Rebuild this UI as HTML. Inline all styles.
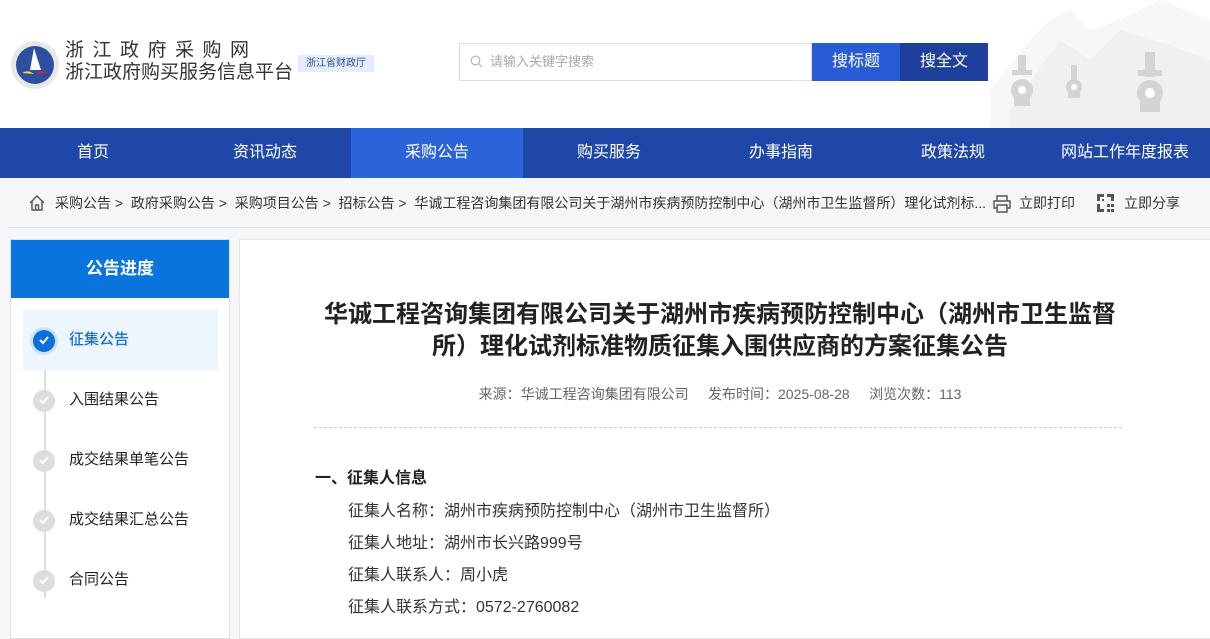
<!DOCTYPE html>
<html><head><meta charset="utf-8"><style>
*{margin:0;padding:0;box-sizing:border-box}
body{width:1210px;height:625px;overflow:hidden;background:#f5f6f7;font-family:"Liberation Sans","Noto Sans CJK SC",sans-serif;color:#333;position:relative}
.hdr{position:absolute;left:0;top:0;width:1210px;height:128px;background:#fff}
.nav{position:absolute;left:0;top:128px;width:1210px;height:50px;background:#1f47a7;display:flex;padding-left:7px}
.nav div{width:172px;text-align:center;color:#fff;font-size:16px;line-height:50px;flex:none}
.nav .on{background:#2b63d9}
.bc{position:absolute;top:178px;left:0;width:1210px;height:50px;font-size:14px;color:#333;line-height:50px}
.abs{position:absolute}
.side{position:absolute;left:10px;top:239px;width:220px;height:400px;background:#fff;border:1px solid #e0e0e0}
.side .h{height:58px;background:#0a74de;color:#fff;font-size:17px;font-weight:bold;text-align:center;line-height:58px}
.step{position:absolute;left:12px;width:195px;height:60px;font-size:15px;line-height:60px;padding-left:46px;color:#222}
.dot{position:absolute;left:22px;top:20px;width:22px;height:22px;border-radius:50%;background:#ddd}
.main{position:absolute;left:239px;top:239px;width:975px;height:400px;background:#fff;border:1px solid #e6e6e6}
p.l{position:absolute;left:348px;font-size:16px;color:#333}
</style></head><body>
<div class="hdr">
 <svg class="abs" style="left:10px;top:40px" width="50" height="50" viewBox="0 0 50 50"><circle cx="25" cy="25" r="24" fill="#e8e8e8"/><circle cx="25" cy="25" r="19" fill="#2d4fa0"/><path d="M24 8 L31 30 L20 30 Z" fill="#fff"/><path d="M12 33 Q18 29 24 34 Z" fill="#f2d630"/><path d="M26 34 Q32 29 38 33 Z" fill="#d8262c"/></svg>
 <div class="abs" style="left:65px;top:40px;font-size:19px;letter-spacing:8.5px;color:#333;line-height:22px">浙江政府采购网</div>
 <div class="abs" style="left:65px;top:62px;font-size:19px;color:#333;line-height:22px">浙江政府购买服务信息平台</div>
 <div class="abs" style="left:298px;top:55px;width:76px;height:17px;background:#e4edfb;color:#2d4fa0;font-size:10px;text-align:center;line-height:17px">浙江省财政厅</div>
 <div class="abs" style="left:459px;top:43px;width:353px;height:38px;border:1px solid #ddd;font-size:13px;color:#aaa;line-height:36px;padding-left:30px">请输入关键字搜索</div>
 <svg class="abs" style="left:470px;top:55px" width="13" height="13" viewBox="0 0 13 13"><circle cx="5.5" cy="5.5" r="4.3" fill="none" stroke="#bbb" stroke-width="1.3"/><path d="M8.7 8.7L12 12" stroke="#bbb" stroke-width="1.3"/></svg>
 <div class="abs" style="left:812px;top:43px;width:88px;height:38px;background:#2a5bd7;color:#fff;font-size:16px;text-align:center;line-height:38px">搜标题</div>
 <div class="abs" style="left:900px;top:43px;width:88px;height:38px;background:#1e3f9c;color:#fff;font-size:16px;text-align:center;line-height:38px">搜全文</div>
 <svg class="abs" style="left:990px;top:0" width="220" height="128" viewBox="0 0 220 128"><path d="M0 90 L40 40 L60 20 L80 10 L100 30 L130 20 L170 0 L220 20 L220 128 L0 128Z" fill="#f7f7f7"/><path d="M20 110 L70 40 L100 60 L130 30 L180 45 L220 60 L220 128 L20 128Z" fill="#f0f0f0"/><g fill="#d4d4d4"><rect x="28" y="55" width="8" height="20"/><rect x="22" y="70" width="20" height="5"/><circle cx="32" cy="90" r="11"/><rect x="24" y="98" width="16" height="8"/><rect x="81" y="65" width="6" height="15"/><circle cx="84" cy="87" r="8"/><rect x="78" y="92" width="12" height="6"/><rect x="155" y="52" width="10" height="25"/><rect x="148" y="70" width="24" height="6"/><circle cx="160" cy="93" r="13"/><rect x="150" y="102" width="20" height="10"/></g><circle cx="32" cy="90" r="4" fill="#fff"/><circle cx="84" cy="87" r="3" fill="#fff"/><circle cx="160" cy="93" r="5" fill="#fff"/></svg>
</div>
<div class="nav"><div>首页</div><div>资讯动态</div><div class="on">采购公告</div><div>购买服务</div><div>办事指南</div><div>政策法规</div><div>网站工作年度报表</div></div>
<div class="bc">
 <svg class="abs" style="left:28px;top:16px" width="18" height="18" viewBox="0 0 18 18"><path d="M2 9 L9 2 L16 9 M4 7 V16 H14 V7 M7.5 16 V11 H10.5 V16" fill="none" stroke="#555" stroke-width="1.4"/></svg>
 <span class="abs" style="left:55px">采购公告 &gt;&nbsp; 政府采购公告 &gt;&nbsp; 采购项目公告 &gt;&nbsp; 招标公告 &gt;&nbsp; 华诚工程咨询集团有限公司关于湖州市疾病预防控制中心（湖州市卫生监督所）理化试剂标...</span>
 <svg class="abs" style="left:992px;top:16px" width="20" height="20" viewBox="0 0 20 20"><path d="M5 7V2H15V7M5 14H2V7H18V14H15M5 11H15V18H5Z" fill="none" stroke="#555" stroke-width="1.4"/></svg>
 <span class="abs" style="left:1019px">立即打印</span>
 <svg class="abs" style="left:1097px;top:16px" width="20" height="20" viewBox="0 0 20 20" fill="#555"><rect x="0" y="0" width="7" height="3"/><rect x="0" y="0" width="3" height="7"/><rect x="10" y="0" width="7" height="3"/><rect x="14" y="0" width="3" height="7"/><rect x="0" y="10" width="3" height="8"/><rect x="0" y="15" width="7" height="3"/><rect x="10" y="10" width="3" height="3"/><rect x="14" y="10" width="3" height="3"/><rect x="10" y="15" width="3" height="3"/><rect x="14" y="15" width="3" height="3"/><rect x="5" y="5" width="2" height="2"/></svg>
 <span class="abs" style="left:1124px">立即分享</span>
 <div class="abs" style="left:8px;top:49px;width:1202px;height:1px;background:#e2e2e2"></div>
</div>
<div class="side"><div class="h">公告进度</div>
 <div class="abs" style="left:33px;top:118px;width:2px;height:240px;background:#ddd"></div>
 <div class="step" style="top:70px;background:#edf5ff;color:#1a6fd8;font-weight:500"><span class="dot" style="left:10px;background:#0a6fd8;box-shadow:0 0 0 3px #cde2fb"></span>征集公告</div>
 <div class="step" style="top:130px"><span class="dot" style="left:10px"></span>入围结果公告</div>
 <div class="step" style="top:190px"><span class="dot" style="left:10px"></span>成交结果单笔公告</div>
 <div class="step" style="top:250px"><span class="dot" style="left:10px"></span>成交结果汇总公告</div>
 <div class="step" style="top:310px"><span class="dot" style="left:10px"></span>合同公告</div>
</div>
<svg class="abs" style="left:37px;top:333px" width="14" height="14" viewBox="0 0 14 14"><path d="M3 7 L6 10 L11 4" fill="none" stroke="#fff" stroke-width="2"/></svg>
<svg class="abs" style="left:37px;top:393px" width="14" height="14" viewBox="0 0 14 14"><path d="M3 7 L6 10 L11 4" fill="none" stroke="#fff" stroke-width="2"/></svg>
<svg class="abs" style="left:37px;top:453px" width="14" height="14" viewBox="0 0 14 14"><path d="M3 7 L6 10 L11 4" fill="none" stroke="#fff" stroke-width="2"/></svg>
<svg class="abs" style="left:37px;top:513px" width="14" height="14" viewBox="0 0 14 14"><path d="M3 7 L6 10 L11 4" fill="none" stroke="#fff" stroke-width="2"/></svg>
<svg class="abs" style="left:37px;top:573px" width="14" height="14" viewBox="0 0 14 14"><path d="M3 7 L6 10 L11 4" fill="none" stroke="#fff" stroke-width="2"/></svg>
<div class="main"></div>
<div class="abs" style="left:270px;top:299px;width:900px;text-align:center;font-size:24px;font-weight:bold;line-height:32px;color:#222;white-space:nowrap">华诚工程咨询集团有限公司关于湖州市疾病预防控制中心（湖州市卫生监督<br>所）理化试剂标准物质征集入围供应商的方案征集公告</div>
<div class="abs" style="left:310px;top:384px;width:820px;text-align:center;font-size:14px;color:#666">来源：华诚工程咨询集团有限公司 &nbsp;&nbsp;&nbsp; 发布时间：2025-08-28 &nbsp;&nbsp;&nbsp; 浏览次数：113</div>
<div class="abs" style="left:314px;top:427px;width:808px;border-top:1px dashed #ccc"></div>
<div class="abs" style="left:315px;top:464px;font-size:16px;font-weight:bold;color:#222">一、征集人信息</div>
<p class="l" style="top:497px">征集人名称：湖州市疾病预防控制中心（湖州市卫生监督所）</p>
<p class="l" style="top:529px">征集人地址：湖州市长兴路999号</p>
<p class="l" style="top:561px">征集人联系人：周小虎</p>
<p class="l" style="top:593px">征集人联系方式：0572-2760082</p>
</body></html>
